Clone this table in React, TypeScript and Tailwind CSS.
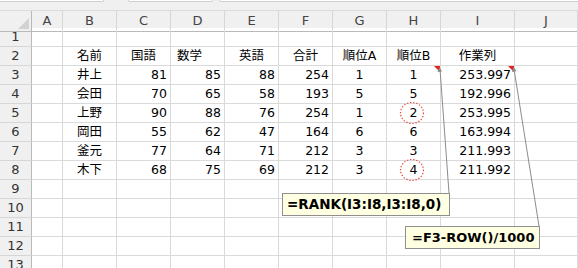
const cols = ['A', 'B', 'C', 'D', 'E', 'F', 'G', 'H', 'I', 'J']

type Align = 'l' | 'c' | 'r'

const align: Align[] = ['l', 'c', 'r', 'r', 'r', 'r', 'c', 'c', 'r', 'l']

// row 2 headings: 数学 sits left in its cell, the rest are centred
const headAlign: Align[] = ['l', 'c', 'c', 'l', 'c', 'c', 'c', 'c', 'c', 'l']

const data: (string | number)[][] = [
  [],
  ['', '名前', '国語', '数学', '英語', '合計', '順位A', '順位B', '作業列'],
  ['', '井上', 81, 85, 88, 254, 1, 1, '253.997'],
  ['', '会田', 70, 65, 58, 193, 5, 5, '192.996'],
  ['', '上野', 90, 88, 76, 254, 1, 2, '253.995'],
  ['', '岡田', 55, 62, 47, 164, 6, 6, '163.994'],
  ['', '釜元', 77, 64, 71, 212, 3, 3, '211.993'],
  ['', '木下', 68, 75, 69, 212, 3, 4, '211.992'],
  [],
  [],
  [],
  [],
  [],
]

const gridCols = 'grid grid-cols-[32px_31px_54px_54px_54px_54px_54px_54px_54px_74px_1fr]'

function Cell({ value, a }: { value: string | number | undefined; a: Align }) {
  const just = a === 'r' ? 'justify-end pr-[3px]' : a === 'c' ? 'justify-center' : 'justify-start pl-[6px]'
  return (
    <div className={`flex h-[19px] items-center overflow-visible whitespace-nowrap border-r border-b border-[#dadada] ${just}`}>
      {value}
    </div>
  )
}

function Sheet() {
  return (
    <div className="flex flex-col">
      <div className={`${gridCols} h-[18px] border-t border-[#dcdcdc] bg-[#f0f0f0] text-[13px] text-[#444]`}>
        <div className="relative border-r border-b border-[#b9b9b9]">
          <div className="absolute right-[2px] bottom-[2px] h-0 w-0 border-b-[11px] border-l-[11px] border-b-[#d2d2d2] border-l-transparent" />
        </div>
        {cols.map((c) => (
          <div key={c} className="flex items-center justify-center border-r border-b border-r-[#d6d6d6] border-b-[#b9b9b9]">
            {c}
          </div>
        ))}
      </div>
      {data.map((row, i) => (
        <div key={i} className={gridCols}>
          <div className="flex h-[19px] items-center justify-center border-r border-b border-r-[#b9b9b9] border-b-[#d6d6d6] bg-[#f0f0f0] text-[13px] text-[#333]">
            {i + 1}
          </div>
          {cols.map((c, j) => (
            <Cell key={c} value={row[j]} a={i === 1 ? headAlign[j] : align[j]} />
          ))}
        </div>
      ))}
    </div>
  )
}

function Overlay() {
  return (
    <svg className="pointer-events-none absolute top-0 left-0" width="578" height="268">
      <polygon points="434,66 440,66 440,72" fill="#e8201c" />
      <polygon points="508,66 514,66 514,72" fill="#e8201c" />
      <line x1="440" y1="69" x2="449" y2="193" stroke="#8c8c8c" strokeWidth="1" />
      <polygon points="439.5,67 437.5,72 442,71.5" fill="#8c8c8c" />
      <line x1="514" y1="69" x2="539" y2="226" stroke="#8c8c8c" strokeWidth="1" />
      <polygon points="513.5,67 512,72 516.5,71" fill="#8c8c8c" />
      <ellipse cx="412" cy="113" rx="11.5" ry="10.5" fill="none" stroke="#e8403a" strokeWidth="1.2" strokeDasharray="1.3 1.8" />
      <ellipse cx="412" cy="170" rx="11.5" ry="10.5" fill="none" stroke="#e8403a" strokeWidth="1.2" strokeDasharray="1.3 1.8" />
    </svg>
  )
}

export default function App() {
  return (
    <div
      className="relative h-[268px] w-[578px] overflow-hidden bg-white text-[12.5px] text-black"
      style={{ fontFamily: '"DejaVu Sans", "Noto Sans CJK JP", sans-serif' }}
    >
      <div className="flex h-[10px] bg-[#f0f0f0]">
        <div className="h-[2px] w-[104px] rounded-br-[3px] border-r border-b border-[#cfcfcf] bg-white" />
        <div className="ml-[24px] h-[2px] w-[85px] rounded-b-[3px] border-x border-b border-[#cfcfcf] bg-white" />
        <div className="ml-[6px] h-[2px] flex-1 rounded-bl-[3px] border-l border-b border-[#cfcfcf] bg-white" />
      </div>
      <Sheet />
      <Overlay />
      <div className="absolute top-[193px] left-[282px] flex h-[23px] w-[168px] items-center border border-[#8f8f8f] bg-[#ffffe1] pl-[4px] text-[13.5px] font-bold whitespace-nowrap">
        =RANK(I3:I8,I3:I8,0)
      </div>
      <div className="absolute top-[226px] left-[405px] flex h-[23px] w-[135px] items-center border border-[#8f8f8f] bg-[#ffffe1] pl-[6px] text-[13px] font-bold whitespace-nowrap">
        =F3-ROW()/1000
      </div>
    </div>
  )
}
